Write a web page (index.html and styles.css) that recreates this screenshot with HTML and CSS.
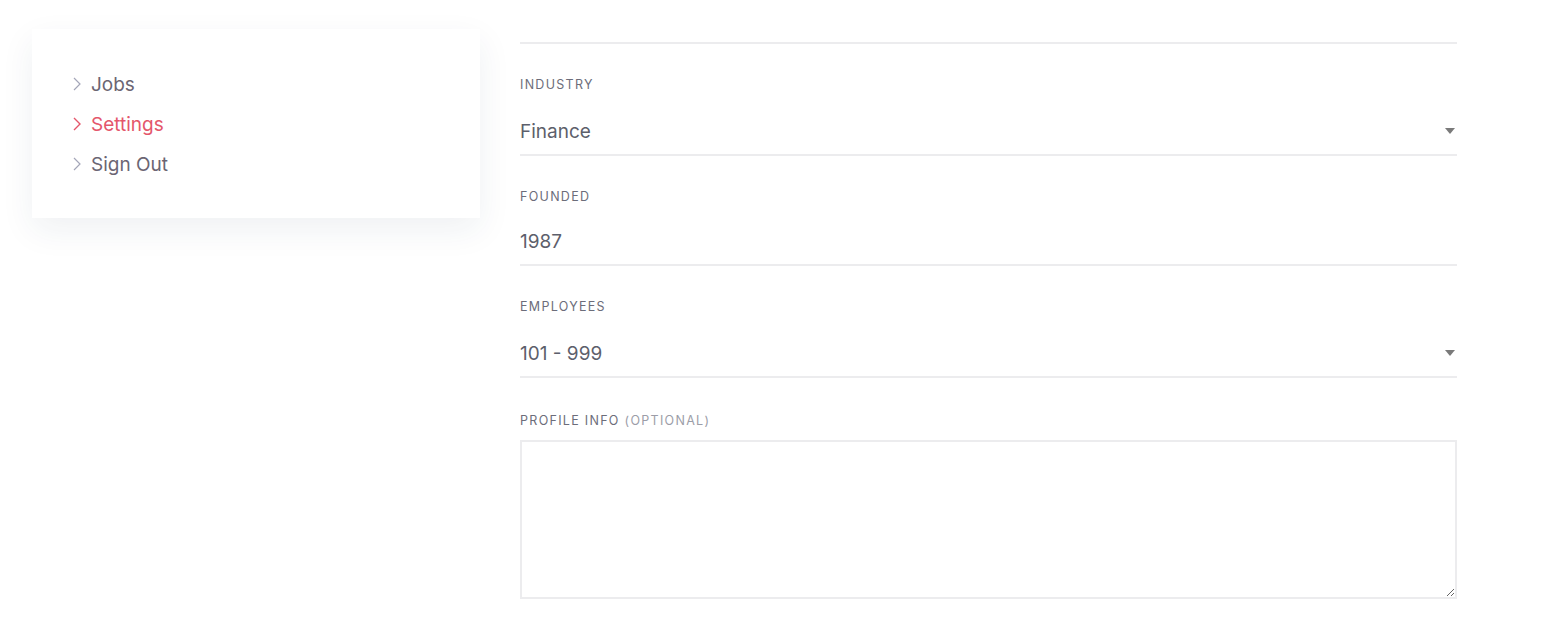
FILE: index.html
```html
<!DOCTYPE html>
<html>
<head>
<meta charset="utf-8">
<link rel="stylesheet" href="styles.css">
</head>
<body>
<div class="page">
  <aside class="sidebar">
    <nav class="menu">
      <a class="menu-item" href="#"><svg class="chev" viewBox="0 0 8 14" width="8" height="14"><path d="M1 1l6 6-6 6" fill="none" stroke="currentColor" stroke-width="1.2"/></svg><span>Jobs</span></a>
      <a class="menu-item active" href="#"><svg class="chev" viewBox="0 0 8 14" width="8" height="14"><path d="M1 1l6 6-6 6" fill="none" stroke="currentColor" stroke-width="1.4"/></svg><span>Settings</span></a>
      <a class="menu-item" href="#"><svg class="chev" viewBox="0 0 8 14" width="8" height="14"><path d="M1 1l6 6-6 6" fill="none" stroke="currentColor" stroke-width="1.2"/></svg><span>Sign Out</span></a>
    </nav>
  </aside>
  <main class="form">
    <div class="prev-line"></div>
    <div class="field">
      <div class="label">Industry</div>
      <div class="control select"><span>Finance</span><svg class="caret" viewBox="0 0 10 6" width="10" height="6"><path d="M0 0h10L5 6z" fill="#7a7a7a"/></svg></div>
    </div>
    <div class="field">
      <div class="label">Founded</div>
      <div class="control"><span>1987</span></div>
    </div>
    <div class="field">
      <div class="label">Employees</div>
      <div class="control select"><span>101 - 999</span><svg class="caret" viewBox="0 0 10 6" width="10" height="6"><path d="M0 0h10L5 6z" fill="#7a7a7a"/></svg></div>
    </div>
    <div class="field">
      <div class="label label-area">Profile Info <span class="opt">(Optional)</span></div>
      <textarea class="area"></textarea>
    </div>
  </main>
</div>
</body>
</html>
```
FILE: styles.css
```css
html, body {
  margin: 0;
  padding: 0;
  background: #ffffff;
  font-family: "Inter", "Noto Sans", sans-serif;
}
.page {
  display: flex;
  align-items: flex-start;
  padding-left: 32px;
  gap: 40px;
}
.sidebar {
  width: 448px;
  margin-top: 29px;
  background: #fff;
  box-shadow: 0 12px 32px rgba(30, 50, 90, 0.07);
  padding: 35px 40px 34px 41px;
  box-sizing: border-box;
}
.menu {
  display: flex;
  flex-direction: column;
}
.menu-item {
  display: flex;
  align-items: center;
  gap: 10px;
  height: 40px;
  font-size: 19px;
  color: #6b6573;
  text-decoration: none;
}
.menu-item .chev {
  color: #a4a6b8;
}
.menu-item.active {
  color: #e4566b;
}
.menu-item.active .chev {
  color: #e4566b;
}
.form {
  width: 937px;
  display: flex;
  flex-direction: column;
}
.prev-line {
  margin-top: 42px;
  border-bottom: 2px solid #ececee;
}
.field {
  margin-top: 30px;
  display: flex;
  flex-direction: column;
}
.label {
  font-size: 12.5px;
  line-height: 20px;
  padding-top: 1px;
  letter-spacing: 1.3px;
  text-transform: uppercase;
  color: #6c6d7a;
  margin-bottom: 11px;
}
.label-area {
  padding-top: 3px;
  margin-bottom: 9px;
}
.label .opt {
  color: #9c9da8;
}
.control {
  height: 48px;
  box-sizing: border-box;
  border-bottom: 2px solid #ececee;
  display: flex;
  align-items: center;
  justify-content: space-between;
  font-size: 19px;
  color: #5d5f6b;
}
.control.select {
  height: 50px;
  padding-top: 2px;
}
.select .caret {
  margin-right: 2px;
}
.area {
  height: 159px;
  box-sizing: border-box;
  border: 2px solid #ececee;
  border-radius: 0;
  outline: none;
  margin: 0;
  width: 937px;
  resize: both;
}
```
